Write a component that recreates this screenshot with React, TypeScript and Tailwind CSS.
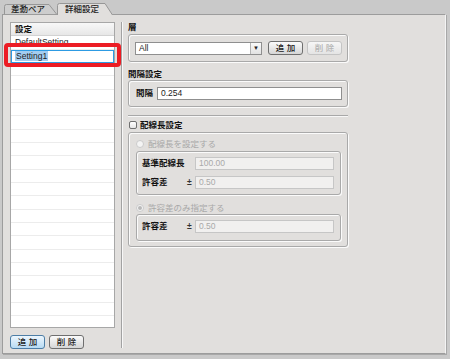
import React from "react";

type Kids = { className?: string; children?: React.ReactNode };

function GroupBox({ className = "", children }: Kids) {
  return (
    <div
      className={`rounded-[3px] border border-[#a9a9a9] shadow-[inset_1px_1px_0_#fbfbfb,1px_1px_0_#fbfbfb] ${className}`}
    >
      {children}
    </div>
  );
}

function Btn({
  label,
  disabled,
  hot,
  className = "",
}: {
  label: string;
  disabled?: boolean;
  hot?: boolean;
  className?: string;
}) {
  const tone = disabled
    ? "border-[#c4c4c4] from-[#f6f6f6] to-[#e4e4e4] text-[#b4b4b4]"
    : hot
    ? "border-[#4d7ea6] from-[#edf6fd] to-[#b8dbf3] text-[#1b1b1b]"
    : "border-[#6f6f6f] from-[#fbfbfb] to-[#d6d6d6] text-[#1b1b1b]";
  return (
    <div
      className={`flex h-[14px] w-[35px] shrink-0 items-center justify-center rounded-[3px] border bg-linear-to-b leading-none font-medium ${tone} ${className}`}
    >
      {label}
    </div>
  );
}

function Field({ value, disabled, className = "" }: { value: string; disabled?: boolean; className?: string }) {
  return (
    <div
      className={`flex h-[13px] items-center border px-[3px] leading-none ${
        disabled ? "border-[#c6c6c6] bg-[#f1f0ef] text-[#a9a9a9]" : "border-[#8f8f8f] bg-white text-[#1b1b1b]"
      } ${className}`}
    >
      {value}
    </div>
  );
}

function Radio({ checked }: { checked?: boolean }) {
  return (
    <div className="flex h-[8px] w-[8px] items-center justify-center rounded-full border border-[#cbcbcb] bg-[#f4f4f4]">
      {checked && <div className="h-[4px] w-[4px] rounded-full bg-[#b9b9b9]" />}
    </div>
  );
}

function Tab({ label, active, w, h }: { label: string; active?: boolean; w: number; h: number }) {
  const sizeClass = active ? "w-[56px] h-[12px] translate-y-[1px] z-10" : "w-[53px] h-[10px]";
  const path = active ? "M0.5 12 V2.5 Q0.5 0.5 2.5 0.5 H48 L55.5 12" : "M0.5 10 V2.5 Q0.5 0.5 2.5 0.5 H45 L52.5 10";
  return (
    <div className={`relative shrink-0 ${sizeClass}`}>
      <svg className="absolute inset-0" width={w} height={h} viewBox={`0 0 ${w} ${h}`}>
        <path d={path} fill={active ? "#e1dfdd" : "#cdcdcd"} stroke="#979797" strokeWidth="1" />
      </svg>
      <div className={`relative font-medium leading-[10px] ${active ? "pl-[8px] pt-[1px]" : "pl-[7px]"} text-[#1e1e1e]`}>
        {label}
      </div>
    </div>
  );
}

export default function App() {
  const emptyRows = Array.from({ length: 20 });
  return (
    <div className="relative h-[359px] w-[450px] overflow-hidden bg-[#c9c9c9] font-['Liberation_Sans','Noto_Sans_CJK_JP',sans-serif] text-[8.5px] text-[#1e1e1e]">
      {/* tabs */}
      <div className="flex h-[14px] items-end pl-[4px]">
        <Tab label="差動ペア" w={53} h={10} />
        <Tab label="詳細設定" active w={56} h={12} />
      </div>

      {/* tab page */}
      <div className="mx-[2px] flex h-[340px] w-[444px] border border-[#9c9c9c] border-r-[#f4f4f4] bg-[#e1dfdd] shadow-[1px_1px_0_#a8a8a8]">
        {/* settings list */}
        <div className="flex flex-col pl-[7px] pt-[7px]">
          <div className="h-[306px] w-[105px] overflow-hidden border border-[#a7a7a7] bg-white">
            <div className="flex h-[13.33px] items-center border-b border-[#d2d2d2] bg-linear-to-b from-[#f8f8f8] to-[#e7e7e7] pl-[4px] font-bold text-[#111]">
              設定
            </div>
            <div className="flex h-[13.33px] items-center border-b border-[#ececec] pl-[4px]">DefaultSetting</div>
            <div className="flex h-[13.33px] items-center border border-[#2d9be3] pl-[3px]">
              <span className="bg-[#a3cdf0] px-px leading-[10px]">Setting1</span>
            </div>
            {emptyRows.map((_, i) => (
              <div key={i} className="h-[13.33px] border-b border-[#ececec]" />
            ))}
          </div>
          <div className="mt-[7px] flex gap-[4px]">
            <Btn label="追 加" hot />
            <Btn label="削 除" />
          </div>
        </div>

        {/* splitter */}
        <div className="ml-[6px] mt-[7px] h-[326px] w-[2px] border-l border-[#a2a2a2] border-r border-r-[#f7f7f7]" />

        {/* detail settings */}
        <div className="ml-[5px] flex w-[220px] flex-col">
          <div className="h-[19px] pt-[6px] font-bold leading-[12px] text-[#111]">層</div>
          <GroupBox className="flex h-[28px] items-center pl-[6px]">
            <div className="flex h-[13px] w-[127px] items-center border border-[#8f8f8f] bg-white">
              <span className="flex-1 pl-[3px] leading-none">All</span>
              <div className="flex h-full w-[11px] items-center justify-center border-l border-[#b4b4b4] bg-linear-to-b from-[#fafafa] to-[#e2e2e2] text-[6px] leading-none text-[#222]">
                ▼
              </div>
            </div>
            <Btn label="追 加" className="ml-[6px]" />
            <Btn label="削 除" disabled className="ml-[4px]" />
          </GroupBox>

          <div className="h-[18px] pt-[6px] font-bold leading-[12px] text-[#111]">間隔設定</div>
          <GroupBox className="flex h-[27px] items-center pl-[7px]">
            <span className="w-[21px] font-bold text-[#111]">間隔</span>
            <Field value="0.254" className="w-[185px]" />
          </GroupBox>

          <div className="mt-[8px] h-[2px] border-t border-[#a8a8a8] border-b border-b-[#f7f7f7]" />

          <div className="mt-[2px] flex h-[12px] items-center pl-[1px]">
            <div className="h-[8px] w-[8px] rounded-[2px] border border-[#707070] bg-linear-to-b from-white to-[#e6e6e6]" />
            <span className="ml-[3px] font-bold text-[#111]">配線長設定</span>
          </div>

          <GroupBox className="mt-[1px] flex h-[115px] flex-col pl-[7px] pr-[6px] pt-[5px]">
            <div className="flex h-[12px] items-center text-[#a8a8a8]">
              <Radio />
              <span className="ml-[4px]">配線長を設定する</span>
            </div>
            <GroupBox className="mt-[1px] flex h-[44px] flex-col gap-[6px] pl-[5px] pr-[6px] pt-[5px]">
              <div className="flex items-center">
                <span className="w-[45px] font-bold text-[#111]">基準配線長</span>
                <span className="w-[8px]" />
                <Field value="100.00" disabled className="flex-1" />
              </div>
              <div className="flex items-center">
                <span className="w-[45px] font-bold text-[#111]">許容差</span>
                <span className="w-[8px] font-bold text-[#333]">±</span>
                <Field value="0.50" disabled className="flex-1" />
              </div>
            </GroupBox>

            <div className="mt-[7px] flex h-[12px] items-center text-[#a8a8a8]">
              <Radio checked />
              <span className="ml-[4px]">許容差のみ指定する</span>
            </div>
            <GroupBox className="flex h-[27px] flex-col pl-[5px] pr-[6px] pt-[5px]">
              <div className="flex items-center">
                <span className="w-[45px] font-bold text-[#111]">許容差</span>
                <span className="w-[8px] font-bold text-[#333]">±</span>
                <Field value="0.50" disabled className="flex-1" />
              </div>
            </GroupBox>
          </GroupBox>
        </div>
      </div>

      {/* annotation */}
      <div className="absolute left-[4px] top-[43px] h-[24px] w-[117px] rounded-[4px] border-[4px] border-[#ec1c24]" />
    </div>
  );
}
